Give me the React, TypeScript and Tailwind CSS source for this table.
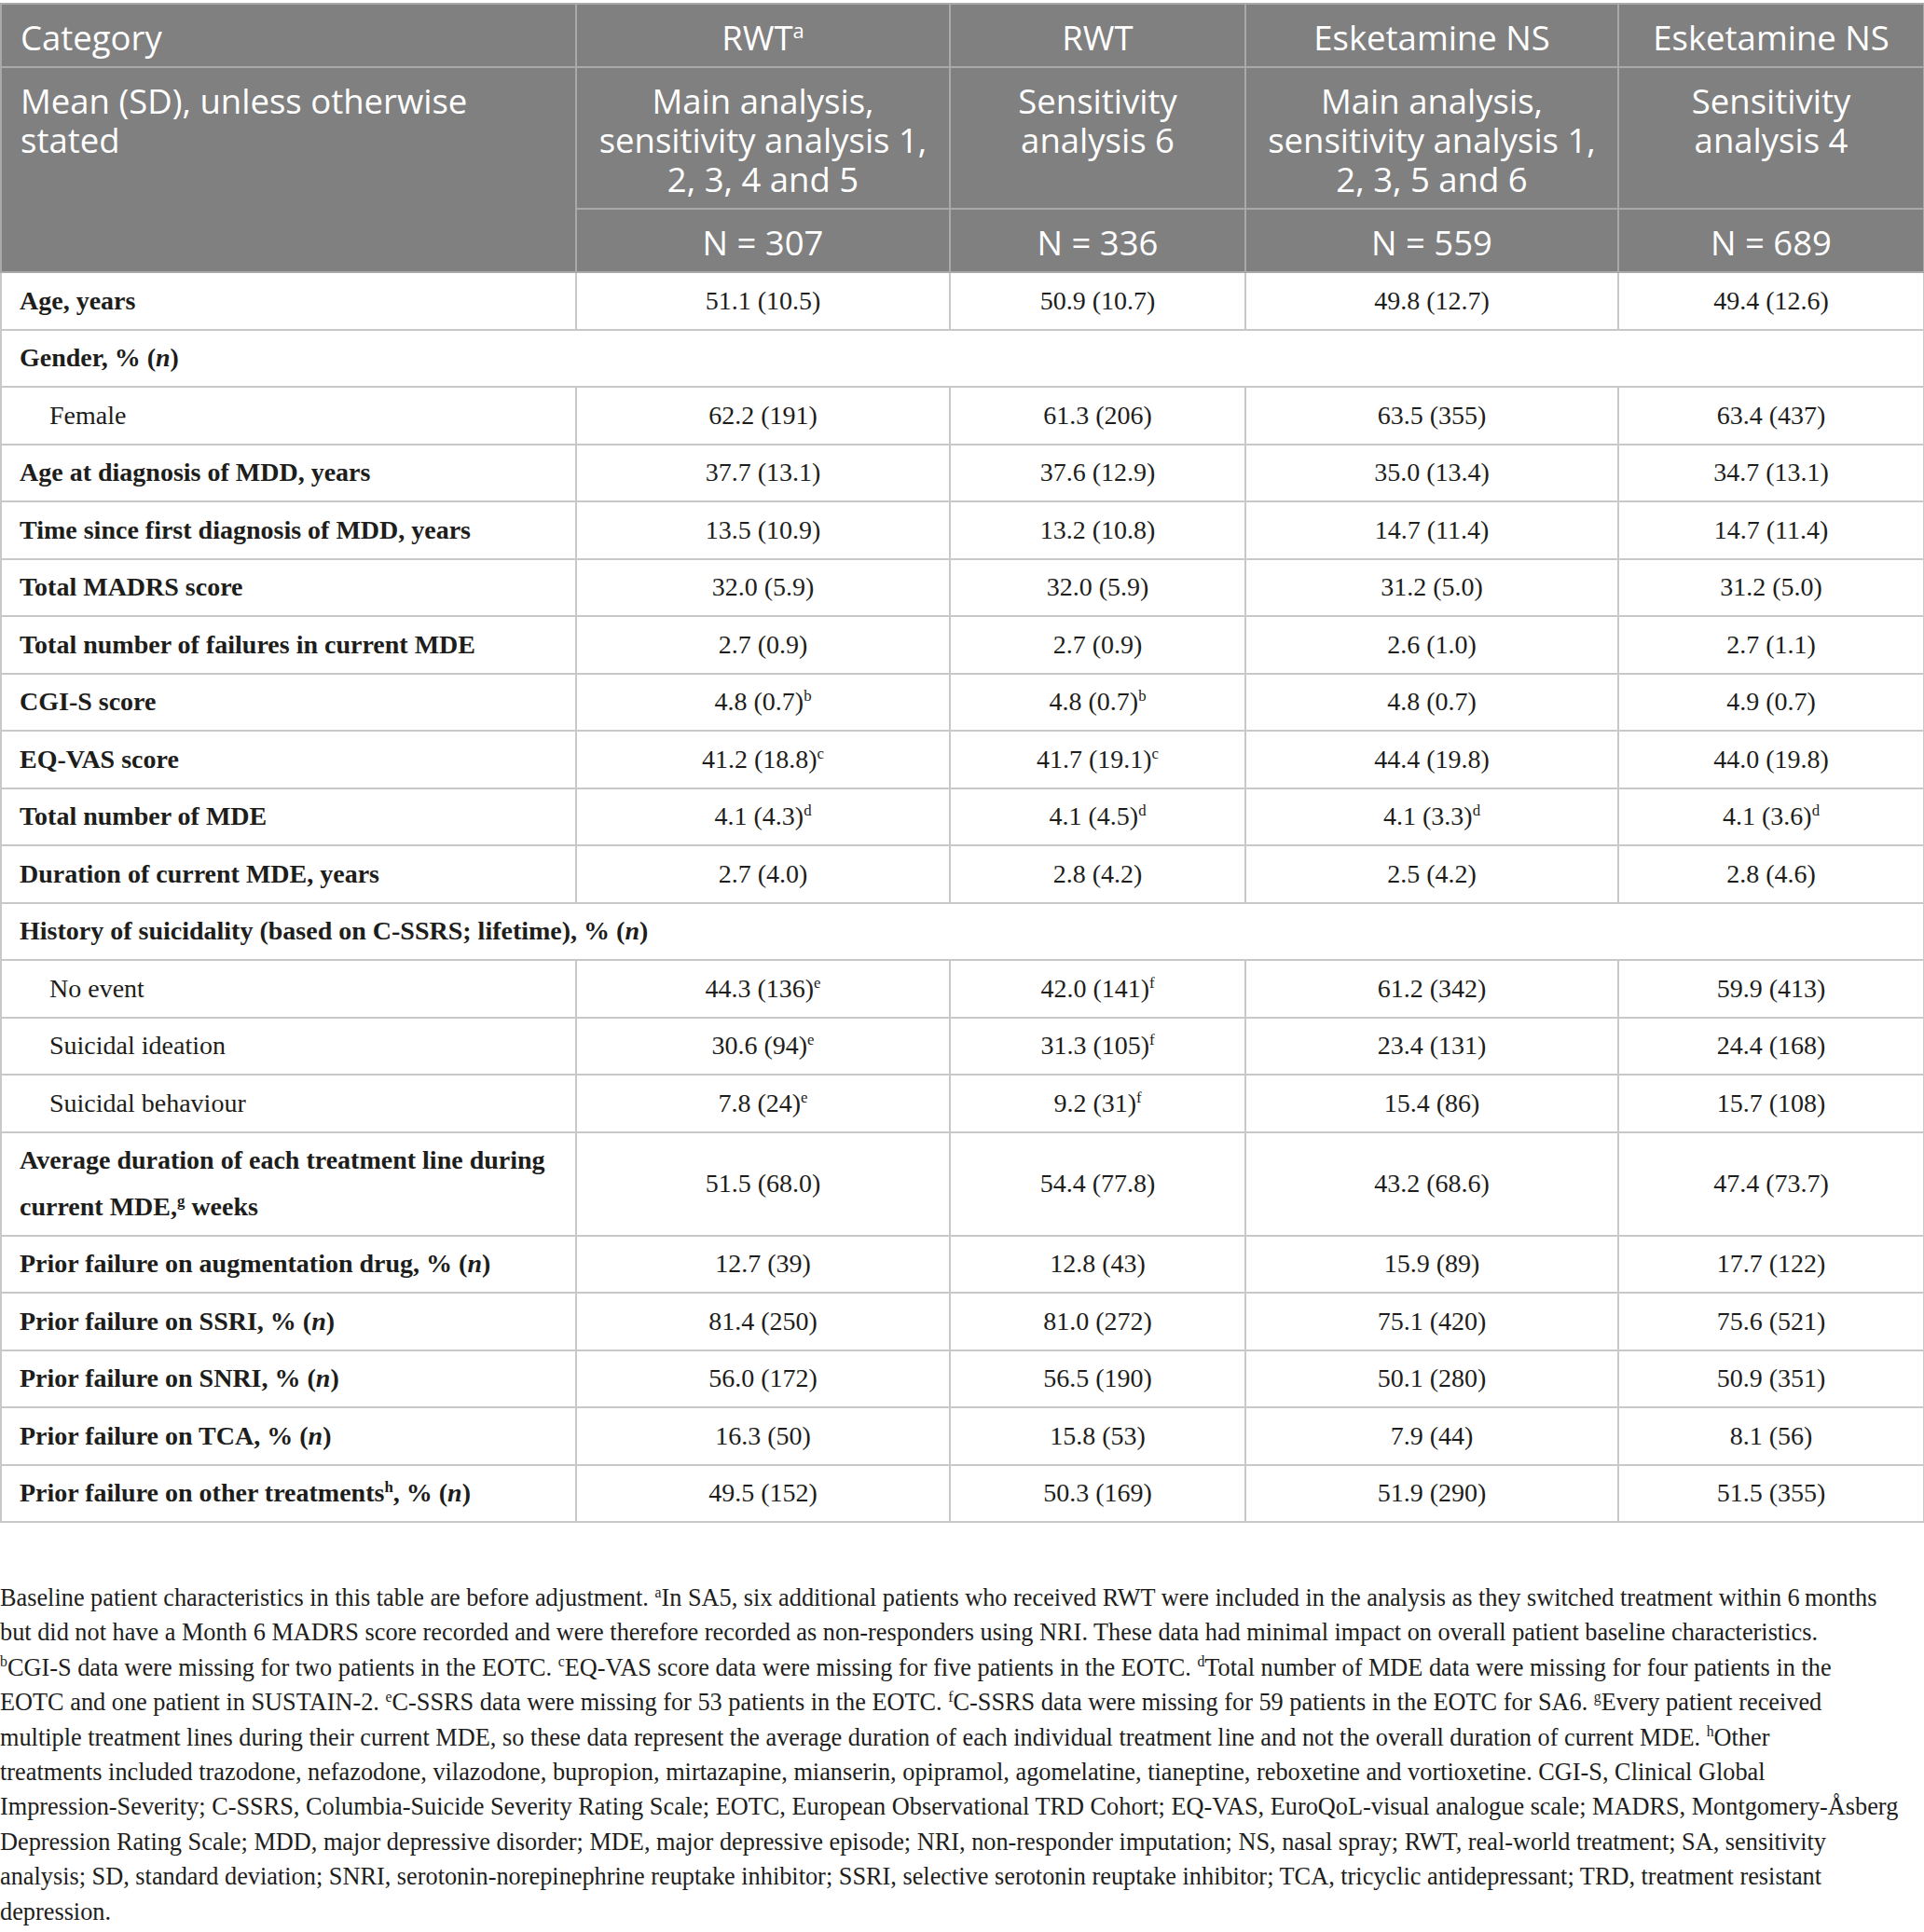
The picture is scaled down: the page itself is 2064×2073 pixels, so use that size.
import React from "react";

type Row = {
  label: React.ReactNode;
  values?: React.ReactNode[];
  indent?: boolean;
  span?: boolean;
  tall?: boolean;
};

const N = () => <i>n</i>;

const Sup = ({ children }: { children: React.ReactNode }) => (
  <sup className="relative -top-[0.6em] align-baseline text-[0.6em] leading-none">
    {children}
  </sup>
);

const rows: Row[] = [
  { label: "Age, years", values: ["51.1 (10.5)", "50.9 (10.7)", "49.8 (12.7)", "49.4 (12.6)"] },
  { label: <>Gender, % (<N />)</>, span: true },
  { label: "Female", indent: true, values: ["62.2 (191)", "61.3 (206)", "63.5 (355)", "63.4 (437)"] },
  { label: "Age at diagnosis of MDD, years", values: ["37.7 (13.1)", "37.6 (12.9)", "35.0 (13.4)", "34.7 (13.1)"] },
  { label: "Time since first diagnosis of MDD, years", values: ["13.5 (10.9)", "13.2 (10.8)", "14.7 (11.4)", "14.7 (11.4)"] },
  { label: "Total MADRS score", values: ["32.0 (5.9)", "32.0 (5.9)", "31.2 (5.0)", "31.2 (5.0)"] },
  { label: "Total number of failures in current MDE", values: ["2.7 (0.9)", "2.7 (0.9)", "2.6 (1.0)", "2.7 (1.1)"] },
  {
    label: "CGI-S score",
    values: [<>4.8 (0.7)<Sup>b</Sup></>, <>4.8 (0.7)<Sup>b</Sup></>, "4.8 (0.7)", "4.9 (0.7)"],
  },
  {
    label: "EQ-VAS score",
    values: [<>41.2 (18.8)<Sup>c</Sup></>, <>41.7 (19.1)<Sup>c</Sup></>, "44.4 (19.8)", "44.0 (19.8)"],
  },
  {
    label: "Total number of MDE",
    values: [
      <>4.1 (4.3)<Sup>d</Sup></>,
      <>4.1 (4.5)<Sup>d</Sup></>,
      <>4.1 (3.3)<Sup>d</Sup></>,
      <>4.1 (3.6)<Sup>d</Sup></>,
    ],
  },
  { label: "Duration of current MDE, years", values: ["2.7 (4.0)", "2.8 (4.2)", "2.5 (4.2)", "2.8 (4.6)"] },
  { label: <>History of suicidality (based on C-SSRS; lifetime), % (<N />)</>, span: true },
  {
    label: "No event",
    indent: true,
    values: [<>44.3 (136)<Sup>e</Sup></>, <>42.0 (141)<Sup>f</Sup></>, "61.2 (342)", "59.9 (413)"],
  },
  {
    label: "Suicidal ideation",
    indent: true,
    values: [<>30.6 (94)<Sup>e</Sup></>, <>31.3 (105)<Sup>f</Sup></>, "23.4 (131)", "24.4 (168)"],
  },
  {
    label: "Suicidal behaviour",
    indent: true,
    values: [<>7.8 (24)<Sup>e</Sup></>, <>9.2 (31)<Sup>f</Sup></>, "15.4 (86)", "15.7 (108)"],
  },
  {
    label: <>Average duration of each treatment line during current MDE,<Sup>g</Sup> weeks</>,
    tall: true,
    values: ["51.5 (68.0)", "54.4 (77.8)", "43.2 (68.6)", "47.4 (73.7)"],
  },
  { label: <>Prior failure on augmentation drug, % (<N />)</>, values: ["12.7 (39)", "12.8 (43)", "15.9 (89)", "17.7 (122)"] },
  { label: <>Prior failure on SSRI, % (<N />)</>, values: ["81.4 (250)", "81.0 (272)", "75.1 (420)", "75.6 (521)"] },
  { label: <>Prior failure on SNRI, % (<N />)</>, values: ["56.0 (172)", "56.5 (190)", "50.1 (280)", "50.9 (351)"] },
  { label: <>Prior failure on TCA, % (<N />)</>, values: ["16.3 (50)", "15.8 (53)", "7.9 (44)", "8.1 (56)"] },
  {
    label: <>Prior failure on other treatments<Sup>h</Sup>, % (<N />)</>,
    values: ["49.5 (152)", "50.3 (169)", "51.9 (290)", "51.5 (355)"],
  },
];

// footnote, broken where the printed table breaks it
const notes: React.ReactNode[] = [
  <>
    Baseline patient characteristics in this table are before adjustment. <Sup>a</Sup>In SA5, six additional
    patients who received RWT were included in the analysis as they switched treatment within 6&#8201;months
  </>,
  <>
    but did not have a Month 6 MADRS score recorded and were therefore recorded as non-responders using NRI.
    These data had minimal impact on overall patient baseline characteristics.
  </>,
  <>
    <Sup>b</Sup>CGI-S data were missing for two patients in the EOTC. <Sup>c</Sup>EQ-VAS score data were
    missing for five patients in the EOTC. <Sup>d</Sup>Total number of MDE data were missing for four patients
    in the
  </>,
  <>
    EOTC and one patient in SUSTAIN-2. <Sup>e</Sup>C-SSRS data were missing for 53 patients in the EOTC.{" "}
    <Sup>f</Sup>C-SSRS data were missing for 59 patients in the EOTC for SA6. <Sup>g</Sup>Every patient received
  </>,
  <>
    multiple treatment lines during their current MDE, so these data represent the average duration of each
    individual treatment line and not the overall duration of current MDE. <Sup>h</Sup>Other
  </>,
  <>
    treatments included trazodone, nefazodone, vilazodone, bupropion, mirtazapine, mianserin, opipramol,
    agomelatine, tianeptine, reboxetine and vortioxetine. CGI-S, Clinical Global
  </>,
  <>
    Impression-Severity; C-SSRS, Columbia-Suicide Severity Rating Scale; EOTC, European Observational TRD
    Cohort; EQ-VAS, EuroQoL-visual analogue scale; MADRS, Montgomery-Åsberg
  </>,
  <>
    Depression Rating Scale; MDD, major depressive disorder; MDE, major depressive episode; NRI, non-responder
    imputation; NS, nasal spray; RWT, real-world treatment; SA, sensitivity
  </>,
  <>
    analysis; SD, standard deviation; SNRI, serotonin-norepinephrine reuptake inhibitor; SSRI, selective
    serotonin reuptake inhibitor; TCA, tricyclic antidepressant; TRD, treatment resistant
  </>,
  <>depression.</>,
];

const head = "border-2 border-[#a9a9a9] px-[20px] font-normal";

export default function App() {
  return (
    <div className="w-[2064px] bg-white pt-[3px] text-[#1d1d1b]">
      <table className="w-[2063px] table-fixed border-collapse">
        <colgroup>
          <col className="w-[617px]" />
          <col className="w-[401px]" />
          <col className="w-[317px]" />
          <col className="w-[400px]" />
          <col className="w-[328px]" />
        </colgroup>
        <thead className="bg-[#808080] text-white font-['Open_Sans',sans-serif] text-[36.5px] leading-[42px]">
          <tr className="h-[68px]">
            <th className={`${head} pt-[4px] text-left`}>Category</th>
            <th className={`${head} pt-[4px]`}>
              RWT<Sup>a</Sup>
            </th>
            <th className={`${head} pt-[4px]`}>RWT</th>
            <th className={`${head} pt-[4px]`}>Esketamine NS</th>
            <th className={`${head} pt-[4px]`}>Esketamine NS</th>
          </tr>
          <tr className="h-[152px]">
            <th rowSpan={2} className={`${head} text-left align-top pt-[14px]`}>
              Mean (SD), unless otherwise stated
            </th>
            <th className={`${head} align-top pt-[14px]`}>
              Main analysis, sensitivity analysis 1, 2, 3, 4 and 5
            </th>
            <th className={`${head} align-top pt-[14px]`}>Sensitivity analysis 6</th>
            <th className={`${head} align-top pt-[14px]`}>
              Main analysis, sensitivity analysis 1, 2, 3, 5 and 6
            </th>
            <th className={`${head} align-top pt-[14px]`}>Sensitivity analysis 4</th>
          </tr>
          <tr className="h-[68px]">
            <th className={`${head} pt-[4px]`}>N = 307</th>
            <th className={`${head} pt-[4px]`}>N = 336</th>
            <th className={`${head} pt-[4px]`}>N = 559</th>
            <th className={`${head} pt-[4px]`}>N = 689</th>
          </tr>
        </thead>
        <tbody className="font-['Liberation_Serif',serif] text-[28px] leading-[50px]">
          {rows.map((r, i) => (
            <tr key={i} className={r.tall ? "h-[111px]" : "h-[61.5px]"}>
              <td
                colSpan={r.span ? 5 : 1}
                className={`border-2 border-[#c8c8c8] py-0 pr-[20px] ${
                  r.indent ? "pl-[51px] font-normal" : "pl-[19px] font-bold"
                }`}
              >
                {r.label}
              </td>
              {!r.span &&
                r.values!.map((v, j) => (
                  <td key={j} className="border-2 border-[#c8c8c8] px-[10px] py-0 text-center">
                    {v}
                  </td>
                ))}
            </tr>
          ))}
        </tbody>
      </table>

      <p className="mt-[62px] font-['Liberation_Serif',serif] text-[26.3px] leading-[37.4px]">
        {notes.map((line, i) => (
          <span key={i} className="block whitespace-nowrap">
            {line}
          </span>
        ))}
      </p>
    </div>
  );
}
